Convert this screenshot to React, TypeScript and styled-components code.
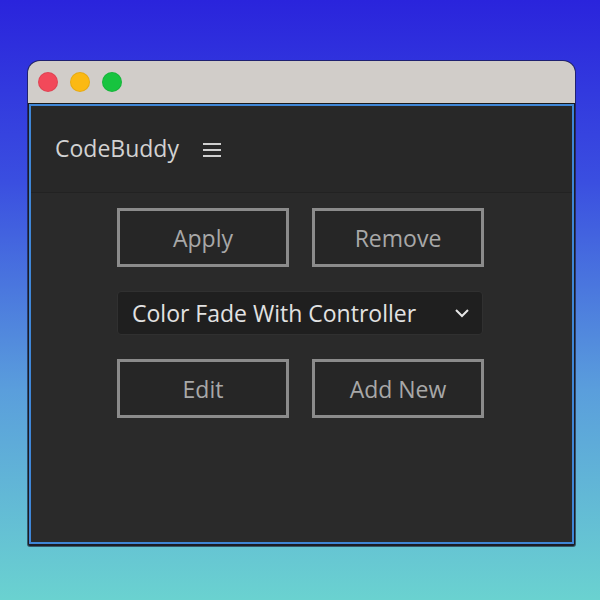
import React from 'react'
import styled, { createGlobalStyle } from 'styled-components'

const Global = createGlobalStyle`
    html, body {
        margin: 0;
        padding: 0;
    }
    body {
        width: 600px;
        height: 600px;
        overflow: hidden;
        background: linear-gradient(180deg, #2a24dc 0%, #3a4ee0 30%, #5a9edc 65%, #6ad2d0 100%);
        font-family: 'Open Sans', 'Noto Sans', sans-serif;
    }
`

const Page_ = styled.div`
    padding: 61px 0 0 28px;
`

const Window_ = styled.div`
    width: 547px;
    height: 485px;
    display: flex;
    flex-direction: column;
    border-radius: 12px 12px 2px 2px;
    overflow: hidden;
    background: #1c1c24;
    box-shadow: 0 0 0 1px rgba(20, 20, 40, 0.6);
`

const TitleBar_ = styled.div`
    height: 42px;
    flex: none;
    background: #d1cdc9;
    display: flex;
    align-items: center;
    gap: 12px;
    padding-left: 10px;
    border-bottom: 1px solid #1a1a1a;
`

const Light_ = styled.span<{ $color: string }>`
    width: 20px;
    height: 20px;
    border-radius: 50%;
    background: ${({ $color }) => $color};
    box-shadow: inset 0 0 0 1px rgba(0, 0, 0, 0.08);
`

const Panel_ = styled.div`
    flex: 1;
    margin: 0 1px 2px 1px;
    border: 2px solid #3f86d6;
    background: #2a2a2a;
    display: flex;
    flex-direction: column;
`

const Header_ = styled.div`
    height: 86px;
    flex: none;
    display: flex;
    align-items: center;
    gap: 24px;
    padding: 0 0 0 24px;
    background: #282828;
    border-bottom: 1px solid #222222;
`

const Title_ = styled.div`
    font-size: 23px;
    color: #d2d2d2;
    margin-top: -2px;
`

const Menu_ = styled.svg`
    width: 18px;
    height: 16px;
    margin-top: 1px;
`

const Body_ = styled.div`
    display: grid;
    grid-template-columns: 172px 172px;
    column-gap: 23px;
    row-gap: 24px;
    justify-content: center;
    padding-top: 15px;
    padding-right: 2px;
`

const Button_ = styled.button`
    height: 59px;
    background: #262626;
    border: 3px solid #8b8b8b;
    color: #a8a8a8;
    font-family: inherit;
    font-size: 23px;
    padding: 0;
    display: flex;
    align-items: center;
    justify-content: center;
`

const Select_ = styled.div`
    grid-column: 1 / 3;
    height: 44px;
    margin-right: 1px;
    box-sizing: border-box;
    background: #1f1f1f;
    border: 1px solid #303030;
    border-radius: 4px;
    display: flex;
    align-items: center;
    justify-content: space-between;
    padding: 0 12px 0 14px;
    color: #e2e2e2;
    font-size: 23px;
`

const Chevron_ = styled.svg`
    width: 16px;
    height: 10px;
`

const App = () => (
    <>
        <Global />
        <Page_>
            <Window_>
                <TitleBar_>
                    <Light_ $color="#f2495a" />
                    <Light_ $color="#fbb913" />
                    <Light_ $color="#17c43f" />
                </TitleBar_>
                <Panel_>
                    <Header_>
                        <Title_>CodeBuddy</Title_>
                        <Menu_ viewBox="0 0 18 16">
                            <g stroke="#cfcfcf" strokeWidth="2">
                                <line x1="0" y1="2" x2="18" y2="2" />
                                <line x1="0" y1="8" x2="18" y2="8" />
                                <line x1="0" y1="14" x2="18" y2="14" />
                            </g>
                        </Menu_>
                    </Header_>
                    <Body_>
                        <Button_>Apply</Button_>
                        <Button_>Remove</Button_>
                        <Select_>
                            <span>Color Fade With Controller</span>
                            <Chevron_ viewBox="0 0 16 10">
                                <polyline
                                    points="2,2 8,8 14,2"
                                    fill="none"
                                    stroke="#e6e6e6"
                                    strokeWidth="2"
                                />
                            </Chevron_>
                        </Select_>
                        <Button_>Edit</Button_>
                        <Button_>Add New</Button_>
                    </Body_>
                </Panel_>
            </Window_>
        </Page_>
    </>
)

export default App
